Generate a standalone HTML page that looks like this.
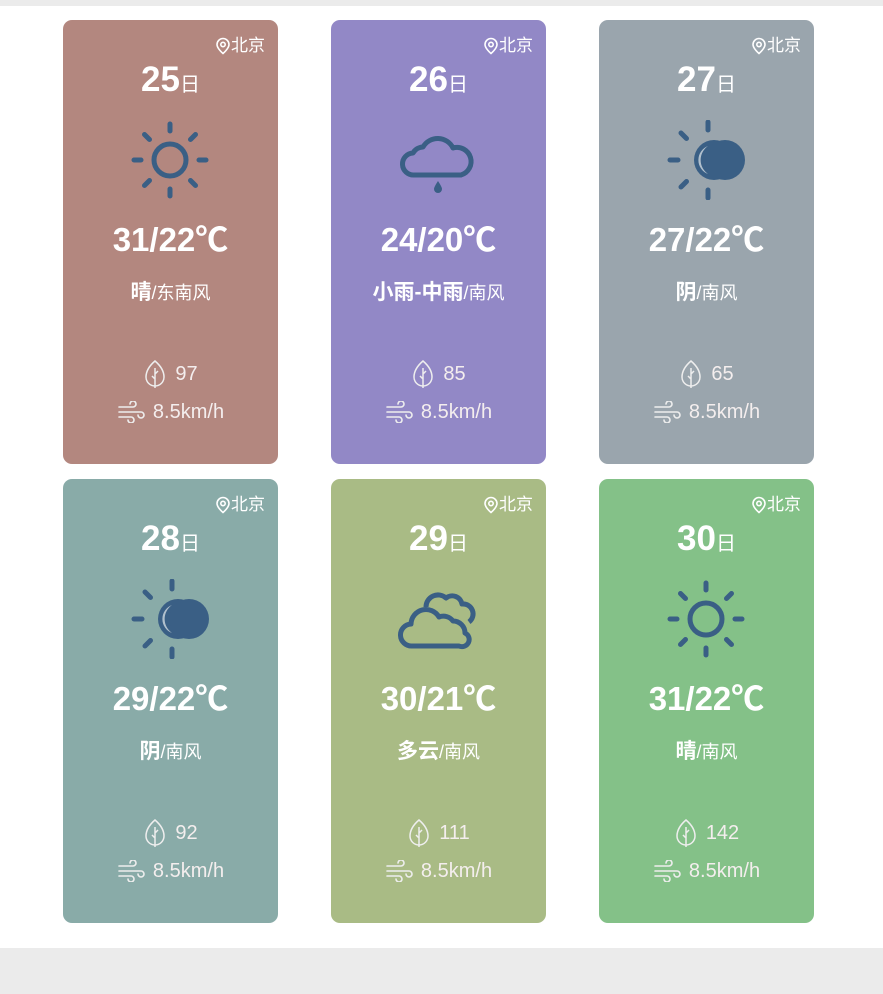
<!DOCTYPE html>
<html><head><meta charset="utf-8"><style>
*{margin:0;padding:0;box-sizing:border-box}
body{width:883px;height:994px;background:#ebebeb;position:relative;overflow:hidden;font-family:"Liberation Sans","Noto Sans CJK SC",sans-serif;color:#fff}
.wrap{position:absolute;left:0;top:6px;width:883px;height:942px;background:#fff}
.card{position:absolute;width:215px;height:444px;border-radius:9px}
.loc{position:absolute;right:13px;top:14px;font-size:17px;display:flex;align-items:center;line-height:24px}
.date{position:absolute;left:0;right:0;top:38px;text-align:center;font-weight:bold;font-size:35px;line-height:44px}
.date span{font-size:20px;font-weight:normal}
.icon{position:absolute;left:62px;top:100px;width:90px;height:80px}
.temp{position:absolute;left:0;right:0;top:199px;text-align:center;font-weight:bold;font-size:33px;line-height:42px}
.desc{position:absolute;left:0;right:0;top:258px;text-align:center;font-size:21px;line-height:30px;font-weight:bold}
.desc span{font-size:18px;font-weight:normal}
.row{position:absolute;left:0;right:0;text-align:center;font-size:20px;display:flex;justify-content:center;align-items:center;line-height:24px;color:#f4eeee}
.r1{top:339px}.r2{top:380px}
.row svg{margin-right:8px}
</style></head><body>
<div class="wrap"></div>
<svg width="0" height="0" style="position:absolute">
<defs>
<symbol id="pin" viewBox="0 0 16 18"><path d="M8 1.5a6 6 0 0 0-6 6c0 4 6 9 6 9s6-5 6-9a6 6 0 0 0-6-6z" fill="none" stroke="#fff" stroke-width="1.6"/><circle cx="8" cy="7.5" r="2.2" fill="none" stroke="#fff" stroke-width="1.6"/></symbol>
<symbol id="leaf" viewBox="0 0 24 30"><path d="M12 2C5 8 3 13 3 18a9 9 0 0 0 18 0c0-5-2-10-9-16z" fill="none" stroke="#eee" stroke-width="1.5"/><path d="M12 9v20M12 15l3-3M12 20l-3-3" fill="none" stroke="#eee" stroke-width="1.5"/></symbol>
<symbol id="wind" viewBox="0 0 28 22"><path d="M2 6h14a3 3 0 1 0-3-3M2 11h22a3 3 0 1 1-3 3M2 16h12a3 3 0 1 1-3 3" fill="none" stroke="#eee" stroke-width="1.6" stroke-linecap="round"/></symbol>
<symbol id="sun" viewBox="0 0 90 80"><g stroke="#3a5f85" stroke-width="5" stroke-linecap="round" fill="none"><circle cx="45" cy="40" r="16"/><path d="M45 4v7M45 69v7M9 40h7M74 40h7M19.5 14.5l5 5M65.5 60.5l5 5M70.5 14.5l-5 5M24.5 60.5l-5 5"/></g></symbol>
<symbol id="half" viewBox="0 0 90 80"><g stroke="#3a5f85" stroke-width="5" stroke-linecap="round" fill="none"><path d="M47 2v8M47 70v8M9 40h8M20 13l5.5 5.5M25.5 61.5l-5.5 5.5"/></g><circle cx="53" cy="40" r="20" fill="#3a5f85"/><circle cx="64" cy="40" r="20" fill="#3a5f85"/><path d="M47 26a17 17 0 0 0 0 28a15 15 0 0 1 0-28z" fill="#d0d8de" opacity=".8"/></symbol>
<symbol id="rain" viewBox="0 0 90 80"><path d="M21 55a11 11 0 0 1 -1-22a12 12 0 0 1 10-6a17 17 0 0 1 30 1a12 12 0 0 1 8 27z" fill="none" stroke="#3a5f85" stroke-width="5" stroke-linejoin="round"/><path d="M45 61q-4 6-4 8a4 4 0 0 0 8 0q0-2-4-8z" fill="#3a5f85"/></symbol>
<symbol id="cloud" viewBox="0 0 90 80"><path d="M33 28a12 12 0 0 1 20-9a10 10 0 0 1 16 6a10 10 0 0 1 7 18" fill="none" stroke="#3a5f85" stroke-width="5" stroke-linejoin="round"/><path d="M19 67a11 11 0 0 1 -1-22a15 15 0 0 1 28-7a12 12 0 0 1 14 4a12 12 0 0 1 12 12a7 7 0 0 1 -6 13z" fill="none" stroke="#3a5f85" stroke-width="5" stroke-linejoin="round"/></symbol>
</defs></svg>

<div class="card" style="left:63px;top:20px;background:#b3877f">
<div class="loc"><svg width="16" height="18"><use href="#pin"/></svg>北京</div>
<div class="date">25<span>日</span></div>
<svg class="icon"><use href="#sun"/></svg>
<div class="temp">31/22℃</div>
<div class="desc">晴<span>/东南风</span></div>
<div class="row r1"><svg width="24" height="30"><use href="#leaf"/></svg>97</div>
<div class="row r2"><svg width="28" height="22"><use href="#wind"/></svg>8.5km/h</div>
</div>

<div class="card" style="left:331px;top:20px;background:#9288c6">
<div class="loc"><svg width="16" height="18"><use href="#pin"/></svg>北京</div>
<div class="date">26<span>日</span></div>
<svg class="icon"><use href="#rain"/></svg>
<div class="temp">24/20℃</div>
<div class="desc">小雨-中雨<span>/南风</span></div>
<div class="row r1"><svg width="24" height="30"><use href="#leaf"/></svg>85</div>
<div class="row r2"><svg width="28" height="22"><use href="#wind"/></svg>8.5km/h</div>
</div>

<div class="card" style="left:599px;top:20px;background:#9aa5ad">
<div class="loc"><svg width="16" height="18"><use href="#pin"/></svg>北京</div>
<div class="date">27<span>日</span></div>
<svg class="icon"><use href="#half"/></svg>
<div class="temp">27/22℃</div>
<div class="desc">阴<span>/南风</span></div>
<div class="row r1"><svg width="24" height="30"><use href="#leaf"/></svg>65</div>
<div class="row r2"><svg width="28" height="22"><use href="#wind"/></svg>8.5km/h</div>
</div>

<div class="card" style="left:63px;top:479px;background:#89aba8">
<div class="loc"><svg width="16" height="18"><use href="#pin"/></svg>北京</div>
<div class="date">28<span>日</span></div>
<svg class="icon"><use href="#half"/></svg>
<div class="temp">29/22℃</div>
<div class="desc">阴<span>/南风</span></div>
<div class="row r1"><svg width="24" height="30"><use href="#leaf"/></svg>92</div>
<div class="row r2"><svg width="28" height="22"><use href="#wind"/></svg>8.5km/h</div>
</div>

<div class="card" style="left:331px;top:479px;background:#a9bb85">
<div class="loc"><svg width="16" height="18"><use href="#pin"/></svg>北京</div>
<div class="date">29<span>日</span></div>
<svg class="icon"><use href="#cloud"/></svg>
<div class="temp">30/21℃</div>
<div class="desc">多云<span>/南风</span></div>
<div class="row r1"><svg width="24" height="30"><use href="#leaf"/></svg>111</div>
<div class="row r2"><svg width="28" height="22"><use href="#wind"/></svg>8.5km/h</div>
</div>

<div class="card" style="left:599px;top:479px;background:#84c188">
<div class="loc"><svg width="16" height="18"><use href="#pin"/></svg>北京</div>
<div class="date">30<span>日</span></div>
<svg class="icon"><use href="#sun"/></svg>
<div class="temp">31/22℃</div>
<div class="desc">晴<span>/南风</span></div>
<div class="row r1"><svg width="24" height="30"><use href="#leaf"/></svg>142</div>
<div class="row r2"><svg width="28" height="22"><use href="#wind"/></svg>8.5km/h</div>
</div>
</body></html>
